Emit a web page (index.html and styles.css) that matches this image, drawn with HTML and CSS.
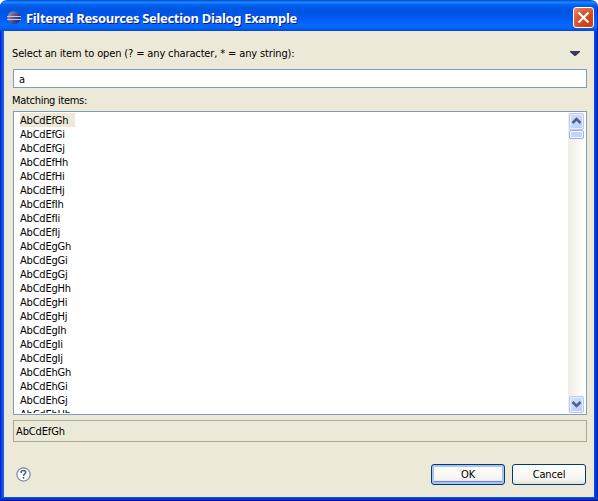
FILE: index.html
```html
<!DOCTYPE html>
<html lang="en">
<head>
<meta charset="utf-8">
<title>Filtered Resources Selection Dialog Example</title>
<link rel="stylesheet" href="styles.css">
</head>
<body>
<main class="dialog">
  <header class="titlebar">
    <svg class="logo" width="15" height="14" viewBox="0 0 15 14">
      <defs><linearGradient id="sphere" x2="1" y2=".6"><stop stop-color="#b9a4bd"/><stop offset=".45" stop-color="#65619a"/><stop offset="1" stop-color="#292763"/></linearGradient></defs>
      <ellipse cx="7" cy="6.5" rx="6.5" ry="6.3" fill="url(#sphere)"/>
      <path d="M0 5.5h14M0 8.5h14" stroke="#c4c4e4" stroke-width="1"/>
    </svg>
    <h1 class="title">Filtered Resources Selection Dialog Example</h1>
    <button class="close" aria-label="Close"><svg width="21" height="21" viewBox="0 0 21 21"><path d="M5.5 5.5l10 10M15.5 5.5l-10 10" stroke="#fff" stroke-width="2.3"/></svg></button>
  </header>
  <section class="content">
    <div class="prompt"><label class="prompt-text">Select an item to open (? = any character, * = any string):</label>
      <svg width="10" height="6" viewBox="0 0 10 6"><path d="M0 0h10v1L5.5 5h-1L0 1z" fill="#3b3758"/></svg>
    </div>
    <div class="field">a</div>
    <div class="matching">Matching items:</div>
    <div class="list">
      <ul class="items">
        <li><span class="selected">AbCdEfGh</span></li><li>AbCdEfGi</li><li>AbCdEfGj</li>
        <li>AbCdEfHh</li><li>AbCdEfHi</li><li>AbCdEfHj</li>
        <li>AbCdEfIh</li><li>AbCdEfIi</li><li>AbCdEfIj</li>
        <li>AbCdEgGh</li><li>AbCdEgGi</li><li>AbCdEgGj</li>
        <li>AbCdEgHh</li><li>AbCdEgHi</li><li>AbCdEgHj</li>
        <li>AbCdEgIh</li><li>AbCdEgIi</li><li>AbCdEgIj</li>
        <li>AbCdEhGh</li><li>AbCdEhGi</li><li>AbCdEhGj</li><li>AbCdEhHh</li>
      </ul>
      <div class="scrollbar">
        <div class="arrow"><svg width="15" height="16" viewBox="0 0 15 16"><path d="M3.5 10l4-4 4 4" fill="none" stroke="#4d6185" stroke-width="2.5"/></svg></div>
        <div class="thumb"></div>
        <div class="track"></div>
        <div class="arrow"><svg width="15" height="16" viewBox="0 0 15 16"><path d="M3.5 6l4 4 4-4" fill="none" stroke="#4d6185" stroke-width="2.5"/></svg></div>
      </div>
    </div>
    <div class="status">AbCdEfGh</div>
    <footer class="footer">
      <svg class="help" width="15" height="15" viewBox="0 0 15 15"><circle cx="7.5" cy="7.5" r="6.6" fill="#fff" stroke="#7888a0" stroke-width="1.2"/><path d="M5.2 6V5.2C5.2 2.9 9.7 2.9 9.7 5.3 9.7 6.8 7.5 6.9 7.5 8.8M7.5 10v1.7" fill="none" stroke="#475e87" stroke-width="1.6"/></svg>
      <div class="buttons"><button class="button default">OK</button><button class="button">Cancel</button></div>
    </footer>
  </section>
</main>
</body>
</html>
```

FILE: styles.css
```css
* { box-sizing: border-box; }
body { margin: 0; background: #fff; overflow: hidden; font: 11px/14px "DejaVu Sans Condensed", "DejaVu Sans", sans-serif; font-stretch: condensed; letter-spacing: -.14px; color: #000; }
button { font: inherit; color: inherit; padding: 0; }
svg { display: block; }
.dialog { width: 598px; height: 501px; padding: 1px 4px 4px; border-radius: 7px 7px 0 0; background: linear-gradient(90deg, #0018c4 0, #0831d9 1px, #166aee 3px, #0855dd 4px, #0855dd 594px, #0040e0 595px, #0030d8 597px, #001590 598px); box-shadow: inset 0 -1px #00138c, inset 0 -3px #0438d0; display: flex; flex-direction: column; overflow: hidden; }
.titlebar { height: 30px; margin: 0 -3px 0 -4px; padding: 0 3px 0 7px; flex: none; display: flex; align-items: center; background: linear-gradient(#0058d8 0, #288eff 1px, #127dff 2px, #036ffc 3px, #0262ee 4px, #0057e5 7px, #0054e3 11px, #0055eb 14px, #005bf5 18px, #026afe 23px, #0263f6 27px, #0054e4 29px, #0045c9 30px); }
.logo { margin: 3px 4px 0 0; }
.title { margin: 3px 0 0; color: #fff; font: bold 13px/20px "Noto Sans", sans-serif; letter-spacing: -.33px; white-space: nowrap; text-shadow: 1px 1px #0a1883; }
.close { width: 21px; height: 21px; margin: 2px 0 0 auto; border: 1px solid #fff; border-radius: 3px; background: radial-gradient(circle at 75% 80%, #d33b09, #d94b29 50%, #e99275 100%); }
.close svg { margin: -1px; }
.content { flex: 1; background: #ece9d8; padding: 15px 7px 0 9px; display: flex; flex-direction: column; }
.prompt { height: 23px; padding: 0 7px 0 0; display: flex; justify-content: space-between; }
.prompt svg { margin-top: 5px; }
.prompt-text { margin-left: -1px; padding-top: 1px; white-space: nowrap; }
.field { height: 19px; flex: none; border: 1px solid #7f9db9; background: #fff; padding: 3px 5px 0; }
.matching { height: 23px; margin-left: -1px; padding-top: 6px; flex: none; letter-spacing: -.3px; }
.list { height: 304px; flex: none; border: 1px solid #7f9db9; background: #fff; padding: 1px; display: flex; }
.items { list-style: none; margin: 0; padding: 0 0 0 5px; flex: 1; overflow: hidden; letter-spacing: -.2px; }
.items li { height: 14px; padding-top: 1px; white-space: nowrap; }
.selected { display: block; width: 55px; height: 14px; margin-top: -1px; padding-top: 1px; background: #ece9d8; }
.scrollbar { width: 17px; display: flex; flex-direction: column; background: linear-gradient(90deg, #eeede5, #fefefb 90%); padding: 0 1px; }
.arrow { height: 17px; flex: none; border: 1px solid #b8caf4; box-shadow: inset 0 0 0 1px #e5edff; border-radius: 2px; background: linear-gradient(135deg, #d5e1ff, #b8cafa); }
.arrow svg { margin: -1px 0 0 -1px; }
.thumb { height: 9px; flex: none; border: 1px solid #98b1e4; border-radius: 2px; background: #c3d3fd; box-shadow: inset 0 0 0 1px #fff; }
.track { flex: 1; }
.status { height: 22px; margin-top: 5px; flex: none; border: 1px solid #aca899; padding: 4px 2px; }
.footer { display: flex; justify-content: space-between; margin-top: 21px; padding: 0 1px 0 3px; }
.help { margin-top: 4px; }
.buttons { display: flex; gap: 7px; margin-top: 1px; }
.button { width: 74px; height: 21px; border: 1px solid #003c74; border-radius: 3px; background: linear-gradient(#fff, #f5f4ef 75%, #e2dfd5); line-height: 19px; letter-spacing: -.15px; }
.default { box-shadow: inset 0 0 0 2px #a9c3f3, inset 0 -1px 0 2px #6982ee; }
```
